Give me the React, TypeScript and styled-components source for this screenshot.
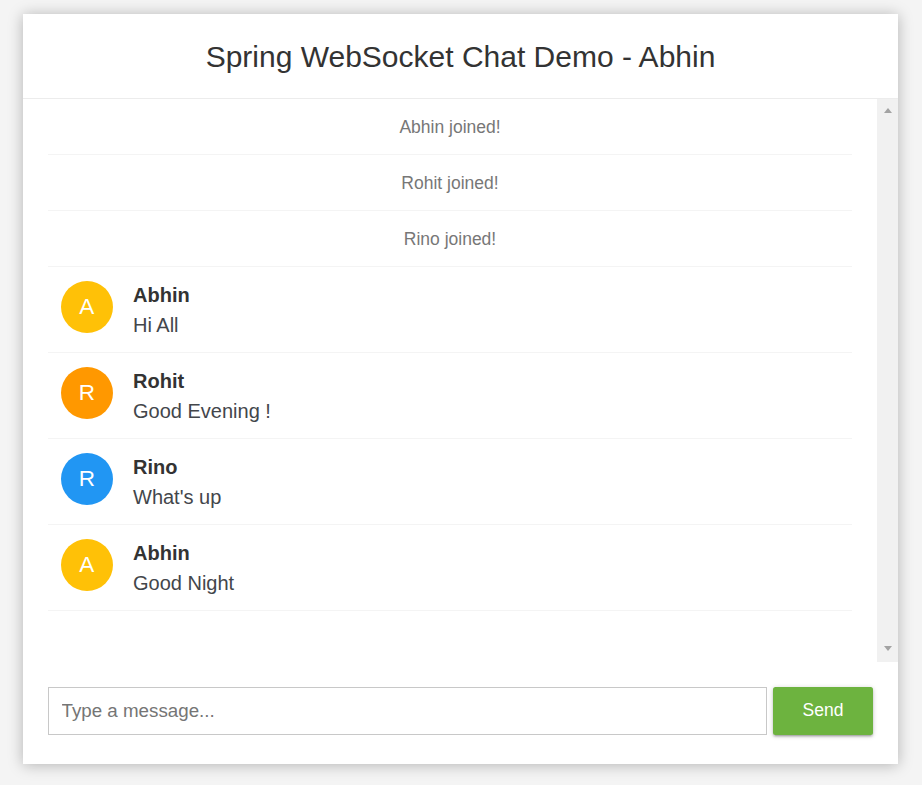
import React from "react";
import styled, { createGlobalStyle } from "styled-components";

const GlobalStyle = createGlobalStyle`
  html, body { margin: 0; padding: 0; height: 100%; overflow: hidden; }
  body {
    font-family: "Liberation Sans", Arial, Helvetica, sans-serif;
    font-size: 20px;
    line-height: 1.58;
    color: #333;
    background-color: #f4f4f4;
  }
  * { box-sizing: border-box; }
`;

const Card = styled.div`
  width: 875px;
  height: 750px;
  margin: 14px 0 0 23px;
  background: #fff;
  box-shadow: 0 1px 14px rgba(0, 0, 0, 0.27);
  display: flex;
  flex-direction: column;
`;

const Header = styled.header`
  text-align: center;
  padding: 19px 15px 18px;
  border-bottom: 1px solid #ececec;
`;

const Title = styled.h2`
  margin: 0;
  font-size: 30px;
  line-height: 47px;
  font-weight: 400;
  color: #333;
`;

const Body = styled.div`
  display: flex;
  height: 563px;
`;

const List = styled.ul`
  flex: 1;
  list-style: none;
  margin: 0;
  padding: 0 25px;
  overflow: hidden;
`;

const EventItem = styled.li`
  padding: 12.5px 25px;
  border-bottom: 1px solid #f4f4f4;
  text-align: center;
  line-height: 30px;
`;

const EventText = styled.p`
  margin: 0;
  color: #777;
  font-size: 17.5px;
`;

const ChatItem = styled.li`
  position: relative;
  padding: 12.5px 25px 12.5px 85px;
  border-bottom: 1px solid #f4f4f4;
  line-height: 30px;
`;

const Avatar = styled.i<{ $color: string }>`
  position: absolute;
  left: 12.5px;
  top: 13.5px;
  width: 52.5px;
  height: 52.5px;
  border-radius: 50%;
  background: ${(p) => p.$color};
  color: #fff;
  font-style: normal;
  font-size: 22.5px;
  line-height: 52.5px;
  text-align: center;
  text-transform: uppercase;
`;

const Name = styled.span`
  color: #333;
  font-weight: 700;
`;

const Text = styled.p`
  margin: 0;
  color: #43464b;
`;

const Scrollbar = styled.div`
  width: 21px;
  background: #f1f1f1;
  display: flex;
  flex-direction: column;
  justify-content: space-between;
  align-items: center;
  padding: 9px 0 11px;
`;

const Arrow = styled.div<{ $down?: boolean }>`
  width: 0;
  height: 0;
  border-left: 4.5px solid transparent;
  border-right: 4.5px solid transparent;
  ${(p) =>
    p.$down
      ? "border-top: 5px solid #a3a3a3;"
      : "border-bottom: 5px solid #a3a3a3;"}
`;

const Form = styled.form`
  display: flex;
  padding: 25px;
  gap: 6px;
`;

const Input = styled.input`
  flex: 0 0 719px;
  height: 47.5px;
  border: 1px solid #c8c8c8;
  padding: 0 0 0 12.5px;
  font-family: "Liberation Sans", Arial, sans-serif;
  font-size: 18.75px;
  color: #333;
  outline: none;
  &::placeholder { color: #757575; }
`;

const SendButton = styled.button`
  width: 100px;
  height: 47.5px;
  border: 1px solid transparent;
  border-radius: 2.5px;
  background: #6db33f;
  color: #fff;
  font-family: "Liberation Sans", Arial, sans-serif;
  font-size: 17.5px;
  box-shadow: 0 2px 2px 0 rgba(0, 0, 0, 0.14), 0 3px 1px -2px rgba(0, 0, 0, 0.12),
    0 1px 5px 0 rgba(0, 0, 0, 0.2);
  cursor: pointer;
`;

type Msg =
  | { type: "event"; text: string }
  | { type: "chat"; name: string; text: string; color: string };

const messages: Msg[] = [
  { type: "event", text: "Abhin joined!" },
  { type: "event", text: "Rohit joined!" },
  { type: "event", text: "Rino joined!" },
  { type: "chat", name: "Abhin", text: "Hi All", color: "#ffc107" },
  { type: "chat", name: "Rohit", text: "Good Evening !", color: "#ff9800" },
  { type: "chat", name: "Rino", text: "What's up", color: "#2196f3" },
  { type: "chat", name: "Abhin", text: "Good Night", color: "#ffc107" },
];

export default function App() {
  return (
    <>
      <GlobalStyle />
      <Card>
        <Header>
          <Title>Spring WebSocket Chat Demo - Abhin</Title>
        </Header>
        <Body>
          <List>
            {messages.map((m, i) =>
              m.type === "event" ? (
                <EventItem key={i}>
                  <EventText>{m.text}</EventText>
                </EventItem>
              ) : (
                <ChatItem key={i}>
                  <Avatar $color={m.color}>{m.name[0]}</Avatar>
                  <Name>{m.name}</Name>
                  <Text>{m.text}</Text>
                </ChatItem>
              )
            )}
          </List>
          <Scrollbar>
            <Arrow />
            <Arrow $down />
          </Scrollbar>
        </Body>
        <Form onSubmit={(e) => e.preventDefault()}>
          <Input type="text" placeholder="Type a message..." />
          <SendButton type="submit">Send</SendButton>
        </Form>
      </Card>
    </>
  );
}
